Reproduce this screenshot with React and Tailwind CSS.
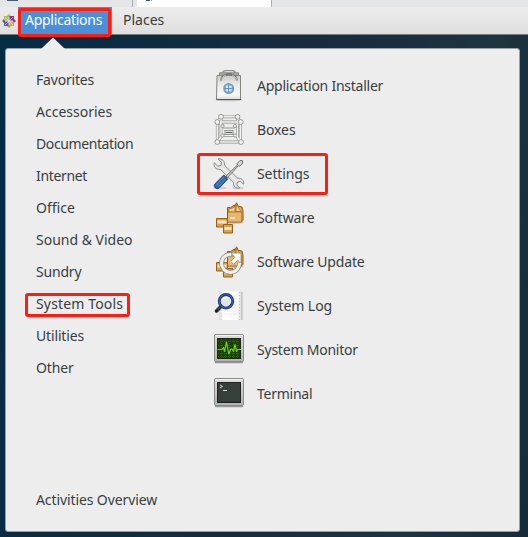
import React from "react";

function Icon({ children }) {
  return (
    <svg viewBox="0 0 32 32" className="h-8 w-8 shrink-0" fill="none">
      {children}
    </svg>
  );
}

function BagIcon() {
  return (
    <Icon>
      <defs>
        <linearGradient id="bag" x1="0" y1="0" x2="0" y2="1">
          <stop offset="0" stopColor="#c9cac6" />
          <stop offset=".35" stopColor="#e9e9e6" />
          <stop offset=".8" stopColor="#f8f8f6" />
          <stop offset="1" stopColor="#dcddd9" />
        </linearGradient>
      </defs>
      <ellipse cx="16" cy="30" rx="13.500" ry="1.300" fill="#c4c4c4" />
      <path d="M6.500 5.500V2.800h19v2.700z" fill="#a9aba6" stroke="#858782" />
      <path d="M9.500 3C10 1 11 .6 12.500.6h7c1.500 0 2.500.4 3 2.400" stroke="#8b8d88" strokeWidth="1.200" />
      <path d="M4 5.500h23.500v24h-24z" fill="url(#bag)" stroke="#85877f" />
      <path d="M3.500 29.500h24.500" stroke="#555753" />
      <path d="M8 10.500C8.500 6.500 10 5.500 13 5.200l1-1.200h4l1 1.200c3 .3 4.500 1.300 5 5.300" stroke="#70726d" strokeWidth="1.700" />
      <path d="M8.500 9.500c.7-3 2-3.500 4.500-3.800M19 5.700c2.500.3 3.800.8 4.500 3.800" stroke="#eeeeec" strokeWidth=".7" />
      <circle cx="15.700" cy="18.500" r="5.500" fill="#729fcf" />
      <rect x="12.800" y="15.600" width="5.800" height="5.800" rx="1" fill="#e3ecf6" />
      <path d="M15.700 15v7M12 18.500h7.500" stroke="#638fc5" strokeWidth="1.100" />
    </Icon>
  );
}

function BoxesIcon() {
  const bars =
    "M4.300 8H27.300V28H4.300ZM8 2.800H24.500V21.500H8ZM4.300 8 8 2.800M27.300 8 24.500 2.800M4.300 28 9 21.500M27.300 28 23.500 21.500M4.300 8l6.200 4.500M27.300 8l-5.800 4.500";
  const joints = [[4.3, 8], [27.7, 8], [4.3, 28], [28, 28], [8, 2.8], [24.5, 2.8]];
  const inner = [[9.5, 12], [22, 12], [9.5, 21.5], [22, 21.5]];
  return (
    <Icon>
      <path d={bars} stroke="#8e908b" strokeWidth="2.800" />
      <path d={bars} stroke="#f4f4f2" strokeWidth="1.500" />
      <path d="M12 16.500h8v4h-8zM10 14h12" stroke="#969893" strokeWidth="1.200" />
      <path d="M13 18.500h6" stroke="#62645f" strokeWidth="1.200" />
      {inner.map(([x, y]) => (
        <circle key={x + "-" + y} cx={x} cy={y} r="1.600" fill="#eee" stroke="#8e908b" strokeWidth=".8" />
      ))}
      {joints.map(([x, y]) => (
        <circle key={x + "-" + y} cx={x} cy={y} r="2.400" fill="#f4f4f2" stroke="#8e908b" strokeWidth=".9" />
      ))}
    </Icon>
  );
}

function SettingsIcon() {
  return (
    <Icon>
      <ellipse cx="7" cy="30" rx="7" ry="1.500" fill="#cfcfcf" />
      <ellipse cx="25" cy="30" rx="6" ry="1.300" fill="#d2d2d2" />
      <path
        d="M5 .9 8.500 4.500 7.800 7.500 4.800 8.200 1.300 4.800C.3 8.500 2.500 11.800 7.500 11.500L20.500 24.500C20 28.500 23 31 26.800 30L23.800 27 24.500 24 27.500 23.300 30.500 26.200C31.500 22.500 28.500 19.800 24.800 20.300L11.500 7.300C12 3.200 9 .2 5 .9Z"
        fill="#e3e4e1"
        stroke="#7f817c"
        strokeWidth=".9"
      />
      <path d="M9.500 9.500 23 23" stroke="#fff" strokeWidth=".8" />
      <path d="M13 18 24.500 7 24 5.500 27 2.500l2.500.2.200 2.500-3 3-1.300-.5L14.500 19.500z" fill="#d3d7cf" stroke="#60625e" strokeWidth=".9" />
      <path d="M10.800 17 14.800 21 6 30.200C3.500 31.800.2 29 1.600 26.200z" fill="#3465a4" stroke="#204a87" strokeLinejoin="round" />
      <path d="m10.700 19.200-7.500 8M12.500 21l-7 7.500" stroke="#729fcf" strokeWidth=".8" />
    </Icon>
  );
}

function Cartons({ children }) {
  return (
    <Icon>
      <ellipse cx="21" cy="20.500" rx="10" ry="1.500" fill="#c9c6c0" />
      <path d="M14.500 5.500h3l4-2.500V5l2-4.200 2 3.700 3.500.5 1 4v9.500L28 20H14.500z" fill="#dca457" stroke="#905a0b" strokeLinejoin="round" />
      <path d="M16 6.500h2.500L22 4.500v5.500h-6zM23.500 2.500l4.500 7h-5z" fill="#f0cd96" stroke="#a96d1b" strokeWidth=".7" />
      <path d="M15 10h13v9.500H15z" fill="#e8b76d" />
      <path d="M15 10h13" stroke="#a96d1b" strokeWidth=".8" />
      <path d="m28 10 1.500-1v9L28 19.500z" fill="#c28534" />
      <path d="M17 16h5" stroke="#fff0d5" strokeWidth="1.500" />
      <path d="M3.500 16.500h11V25h-11z" fill="#d7a052" stroke="#9b6213" />
      <path d="M4.500 18.500h9v3h-9z" fill="#f9e6c6" />
      <path d="M10.500 22.500h9V31h-9z" fill="#d7a052" stroke="#9b6213" />
      <path d="M11.500 25h7v3h-7z" fill="#f9e6c6" />
      {children}
    </Icon>
  );
}

function UpdateIcon() {
  return (
    <Cartons>
      <path d="M18 8.300A9 9 0 1 0 26.500 17" stroke="#7e807b" strokeWidth="4.600" />
      <path d="M18 7h10v10.500l-3.300-3.200-4 4-3-3 4-4z" fill="#fafaf9" stroke="#858782" strokeWidth=".8" />
      <path d="M18 8.300A9 9 0 1 0 26.500 17" stroke="#eeeeec" strokeWidth="3.200" />
    </Cartons>
  );
}

function LogIcon() {
  return (
    <Icon>
      <defs>
        <linearGradient id="logpage">
          <stop offset="0" stopColor="#dedede" />
          <stop offset=".2" stopColor="#fff" />
          <stop offset=".8" stopColor="#fafafa" />
          <stop offset="1" stopColor="#d6d6d6" />
        </linearGradient>
      </defs>
      <path d="M6 1.500h23V30H6z" fill="url(#logpage)" />
      <path d="M29 2v28" stroke="#aaa" strokeWidth=".8" />
      <path d="M8 2v28M26.500 2v28" stroke="#c0c0c0" strokeDasharray="1 2" />
      <path d="M11 6h13M11 9h13M11 12h13M11 15h13M11 18h13M11 21h13M11 24h13" stroke="#e2e2e2" strokeWidth=".6" />
      <path d="m8.500 16-5 5" stroke="#222" strokeWidth="3.500" strokeLinecap="round" />
      <path d="m7.500 17-3 3" stroke="#777" strokeWidth="1" />
      <circle cx="13" cy="11.300" r="6.800" fill="#e0e4ea" stroke="#172c72" strokeWidth="2.800" />
      <circle cx="13" cy="11.300" r="6.800" stroke="#3c60b8" strokeWidth="1.200" />
      <path d="M9.500 10c.8-2 3.500-3 5.500-1.500" stroke="#fff" strokeWidth="1.500" />
    </Icon>
  );
}

function Screen({ dark, children }) {
  return (
    <Icon>
      <defs>
        <linearGradient id="bezel" x1="0" y1="0" x2="0" y2="1">
          <stop offset="0" stopColor="#dededd" />
          <stop offset="1" stopColor="#b3b4b1" />
        </linearGradient>
      </defs>
      <path d="M2 28.500h28" stroke="#999" strokeWidth="1.500" />
      <rect x="1.500" y=".5" width="29" height="27" rx="1.500" fill="url(#bezel)" stroke="#898b86" />
      <path d="M2.500 1.500h27" stroke="#f5f5f5" />
      <rect x="4.500" y="4.500" width="23" height="20" fill={dark} stroke="#1f2422" />
      {children}
    </Icon>
  );
}

function MonitorIcon() {
  return (
    <Screen dark="#194104">
      <path d="M5 7.500h22M5 11.500h22M5 19.500h22M5 22.500h22M8.500 5v19M12.500 5v19M16.500 5v19M20.500 5v19M24.500 5v19" stroke="#397312" strokeWidth=".7" strokeDasharray="1 1" />
      <path d="M4.500 15.500h4.500l1.500-2 1 4 2-9.500 2.300 12 2-5h1.200l1.500 2.500 1.500-7 1.500 7 1-2H28" stroke="#73d216" strokeWidth="1.200" strokeLinejoin="round" />
    </Screen>
  );
}

function TerminalIcon() {
  return (
    <Screen dark="#303936">
      <path d="M5 6h22M5 8h22M5 10h22M5 12h22M5 14h22M5 16h22M5 18h22M5 20h22M5 22h22" stroke="#46504c" strokeWidth=".6" />
      <path d="m7 7 2.500 1.500L7 10M10 12.500h4" stroke="#dce8dc" strokeWidth="1" />
    </Screen>
  );
}

function DistroLogo() {
  return (
    <svg viewBox="0 0 14 14" className="h-3.5 w-3.5 shrink-0">
      <path d="m7 0 3 3H4z" fill="#d9ab4c" />
      <path d="m14 7-3 3V4z" fill="#54559e" />
      <path d="m7 14-3-3h6z" fill="#8faf3a" />
      <path d="m0 7 3-3v6z" fill="#9c438b" />
      <path d="M2 2h4.500v4.500H2z" fill="#a9c15c" />
      <path d="M7.500 2H12v4.500H7.500z" fill="#8d3480" />
      <path d="M2 7.500h4.500V12H2z" fill="#5a5ca6" />
      <path d="M7.500 7.500H12V12H7.500z" fill="#e2a73c" />
      <path d="m3 3 8 8M11 3l-8 8" stroke="#f1ecef" strokeWidth=".6" />
    </svg>
  );
}

const categories = [
  ["Favorites", "tracking-[-0.2px]"],
  ["Accessories", "tracking-normal"],
  ["Documentation", "tracking-[-0.4px]"],
  ["Internet", "tracking-[-0.35px]"],
  ["Office", "tracking-normal"],
  ["Sound & Video", "tracking-normal"],
  ["Sundry", "tracking-[-0.2px]"],
  ["System Tools", "tracking-[0.15px]"],
  ["Utilities", "tracking-[-0.15px]"],
  ["Other", "tracking-[-0.15px]"],
];

const apps = [
  ["Application Installer", BagIcon, "tracking-[-0.25px]"],
  ["Boxes", BoxesIcon, "tracking-[-0.1px]"],
  ["Settings", SettingsIcon, "tracking-[-0.1px]"],
  ["Software", Cartons, "tracking-[-0.1px]"],
  ["Software Update", UpdateIcon, "tracking-[-0.18px]"],
  ["System Log", LogIcon, "tracking-[-0.05px]"],
  ["System Monitor", MonitorIcon, "tracking-[-0.22px]"],
  ["Terminal", TerminalIcon, "tracking-[-0.25px]"],
];

export default function App() {
  return (
    <div className="flex h-[537px] w-[528px] flex-col overflow-hidden bg-[linear-gradient(100deg,#032d45_0%,#182b40_55%,#1b3541_80%,#172a38_100%)] font-['Noto_Sans','Open_Sans',sans-serif] text-[14px] leading-5 text-[#383e40]">
      <div className="flex h-[7px] shrink-0 bg-[#e4e5e7]">
        <div className="w-[133px] border-r border-[#adafb1] pl-[7px]">
          <div className="h-px w-[11px] bg-[#4b5a69]" />
        </div>
        <div className="ml-1 flex w-[135px] border-r border-[#adafb1] bg-white pl-[9px]">
          <div className="h-px w-1 bg-[#3d5365]" />
          <div className="ml-px h-px w-px bg-[#7cb82f]" />
        </div>
      </div>
      <div className="flex h-7 shrink-0 items-stretch border-b border-[#777b79] bg-linear-to-b from-[#ececec] to-[#dfdfdf]">
        <div className="flex w-[18px] items-center justify-end pr-0.5">
          <DistroLogo />
        </div>
        <div className="relative flex w-[94px] items-center bg-[#4a90d9] pb-0.5 pl-[7px] text-white">
          <span className="tracking-[-0.28px] whitespace-nowrap">Applications</span>
          <div className="absolute top-px left-0 h-[29px] w-[93px] rounded-[3px] border-3 border-[#ff1d12]" />
        </div>
        <div className="flex items-center pb-0.5 pl-[11px]">
          <span>Places</span>
        </div>
      </div>
      <div className="relative mt-[13px] ml-[5px] flex h-[484px] w-[515px] shrink-0 rounded-[3px] border border-[#9b9f9f] bg-[#ededed]">
        <svg viewBox="0 0 24 13" className="absolute -top-[12px] left-[35px] h-[13px] w-6">
          <path d="M0 12 12 .5 24 12v1H0z" fill="#ededed" />
        </svg>
        <div className="flex w-[207px] flex-col pt-[15px] pl-[30px]">
          {categories.map(([name, tracking]) => (
            <div key={name} className="relative flex h-8 items-center">
              <span className={"whitespace-nowrap " + tracking}>{name}</span>
              {name === "System Tools" && (
                <div className="absolute top-[5px] -left-[11px] h-6 w-[105px] rounded-[3px] border-3 border-[#ff1d12]" />
              )}
            </div>
          ))}
          <div className="mt-[100px] flex h-8 items-center">
            <span className="tracking-[-0.1px] whitespace-nowrap">Activities Overview</span>
          </div>
        </div>
        <div className="flex flex-col pt-[15px]">
          {apps.map(([name, Glyph, tracking]) => (
            <div key={name} className="relative flex h-11 items-center gap-3">
              <Glyph />
              <span className={"whitespace-nowrap " + tracking}>{name}</span>
              {name === "Settings" && (
                <div className="absolute top-[1px] -left-4 h-[42px] w-[131px] rounded-[3px] border-3 border-[#ff1d12]" />
              )}
            </div>
          ))}
        </div>
      </div>
    </div>
  );
}
